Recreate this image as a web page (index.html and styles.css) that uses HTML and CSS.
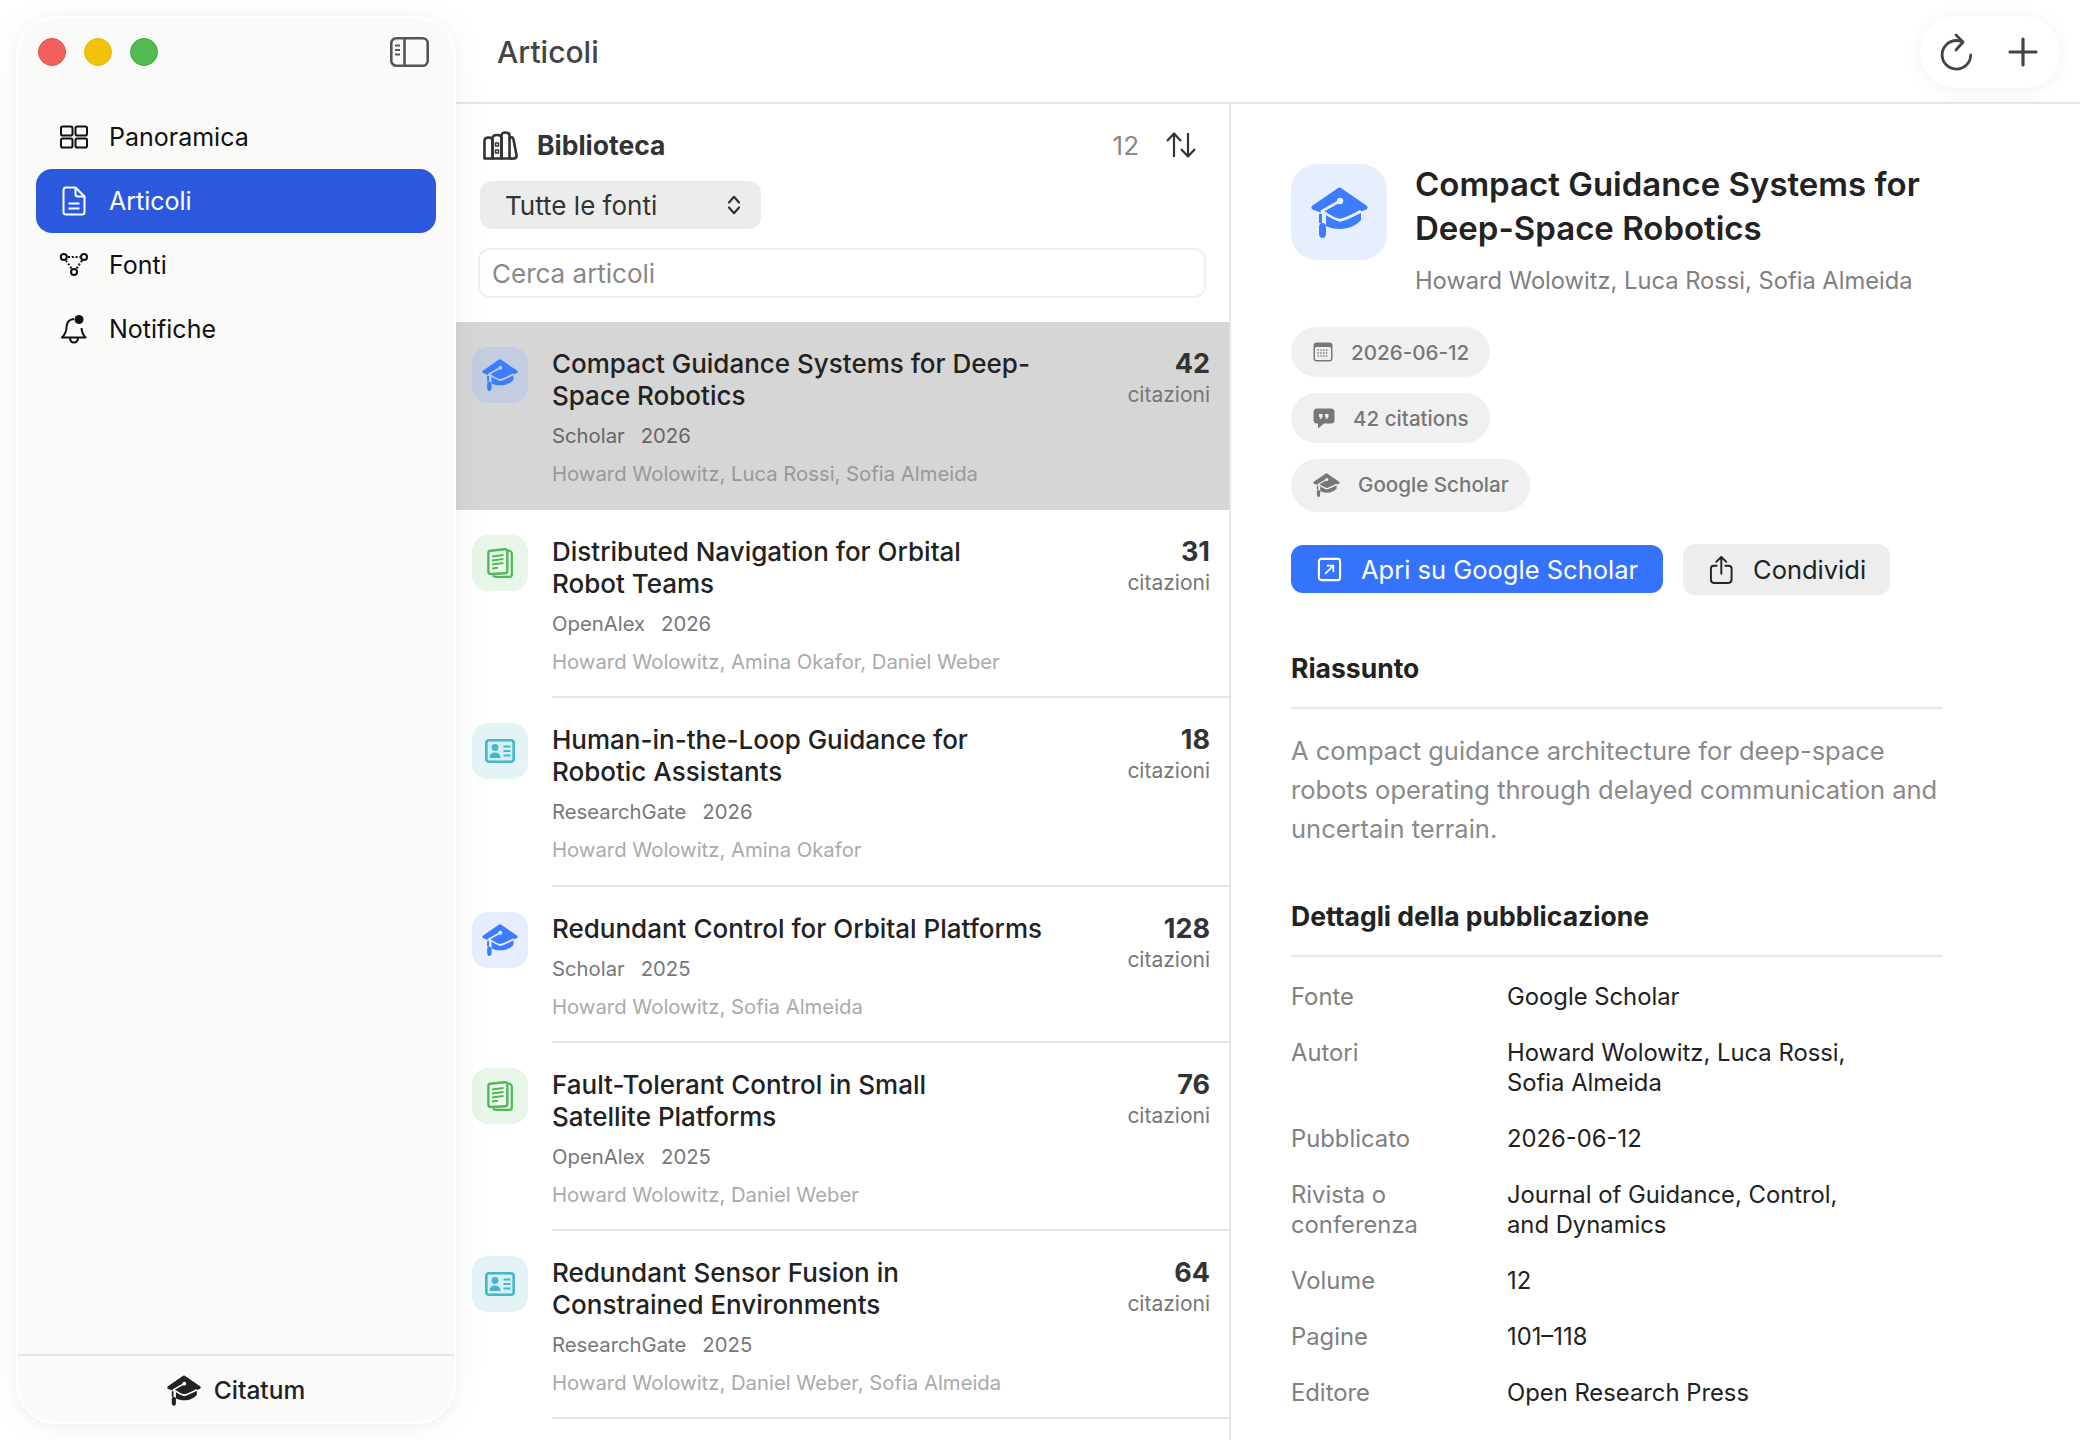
FILE: index.html
```html
<!DOCTYPE html>
<html lang="it">
    <head>
        <meta charset="UTF-8">
        <meta name="viewport" content="width=device-width, initial-scale=1.0">
        <title>Citatum</title>
        <link rel="stylesheet" href="styles.css">
    </head>

    <body>

        <!-- Icone condivise -->

        <svg class="defs" aria-hidden="true">
            <symbol id="cap" viewBox="0 0 57 51">
                <path d="M15 27 L29 35 L50 26 V33 C46 38 38 42 29 42 C24 42 19 41 15 39Z" fill="currentColor"/>
                <path d="M28.5 3 L54 20.5 L28.5 30 L3 20.5Z" fill="currentColor" stroke="currentColor" stroke-width="5" stroke-linejoin="round"/>
                <path d="M11 24 Q24 33 29 33 Q34 33 50 24" fill="none" stroke="var(--cut, #fff)" stroke-width="2.6"/>
                <path d="M29 14 L11 24 V38" fill="none" stroke="var(--cut, #fff)" stroke-width="2.6"/>
                <circle cx="29" cy="14" r="3.2" fill="var(--cut, #fff)"/>
                <path d="M8 27 V36 H11 V27Z" fill="currentColor"/>
                <path d="M8 40 Q8 36 11.500 36 Q15 36 15 40 V46 Q15 51 11.500 51 Q8 51 8 46Z" fill="currentColor"/>
            </symbol>
            <symbol id="book" viewBox="0 0 26 30">
                <path d="M21 2.500 L23 3 Q24.800 3.500 24.800 5.500 V26.500 Q24.800 28.800 22.500 28.800 H9 Q7 28.800 6 27.500" fill="none" stroke="currentColor" stroke-width="2.200"/>
                <path d="M3.500 2.800 L17.500 1.200 Q20.300 1 20.300 3.500 V23 Q20.300 25.200 18 25.300 L4 26 Q1.400 26 1.400 23.500 V5 Q1.400 3 3.500 2.800Z" fill="#eff9ef" stroke="currentColor" stroke-width="2.400"/>
                <path d="M5 8.500 L16.500 7 M5 12.500 L16.500 11 M5 16.500 L16.500 15 M5 20.500 L11 19.700" stroke="currentColor" stroke-width="2"/>
            </symbol>
            <symbol id="card" viewBox="0 0 30 24">
                <rect x="1.300" y="1.300" width="27.400" height="21.400" rx="2.800" fill="#d6eff3" stroke="currentColor" stroke-width="2.600"/>
                <circle cx="10" cy="8.500" r="3.400" fill="currentColor"/>
                <path d="M4.500 19 Q4.500 13.500 10 13.500 Q15.500 13.500 15.500 19Z" fill="currentColor"/>
                <path d="M18.500 7.500 H25.500 M18.500 12 H25.500 M18.500 16.500 H25.500" stroke="currentColor" stroke-width="2"/>
            </symbol>
        </svg>

        <div class="app">

            <!-- Barra laterale -->

            <aside class="sidebar">
                <div class="window-bar">
                    <div class="lights">
                        <span class="light red"></span>
                        <span class="light yellow"></span>
                        <span class="light green"></span>
                    </div>
                    <svg class="toggle" viewBox="0 0 39 30" fill="none" stroke="#555">
                        <rect x="1.300" y="1.300" width="36.400" height="27.400" rx="5" stroke-width="2.600"/>
                        <path d="M14.500 1.500 V28.500" stroke-width="2.600"/>
                        <path d="M5 8.500 H10 M5 13 H10 M5 17.500 H10" stroke-width="1.800"/>
                    </svg>
                </div>

                <nav class="nav">
                    <a class="nav-item">
                        <svg class="nav-icon" viewBox="0 0 30 30" fill="none" stroke="currentColor" stroke-width="2">
                            <rect x="2" y="4.500" width="11.500" height="9" rx="1.800"/>
                            <rect x="16.500" y="4.500" width="11.500" height="9" rx="1.800"/>
                            <rect x="2" y="16.500" width="11.500" height="9" rx="1.800"/>
                            <rect x="16.500" y="16.500" width="11.500" height="9" rx="1.800"/>
                        </svg>
                        <span>Panoramica</span>
                    </a>
                    <a class="nav-item active">
                        <svg class="nav-icon" viewBox="0 0 30 30" fill="none" stroke="currentColor" stroke-width="2" stroke-linejoin="round">
                            <path d="M7 1.500 H16.500 L25.500 10.500 V26 Q25.500 28.500 23 28.500 H7 Q4.500 28.500 4.500 26 V4 Q4.500 1.500 7 1.500Z"/>
                            <path d="M16.500 1.500 V8 Q16.500 10.500 19 10.500 H25.500"/>
                            <path d="M9.500 17.500 H20.500 M9.500 22.500 H20.500"/>
                        </svg>
                        <span>Articoli</span>
                    </a>
                    <a class="nav-item">
                        <svg class="nav-icon" viewBox="0 0 30 30" fill="none" stroke="currentColor" stroke-width="2">
                            <circle cx="4.800" cy="7" r="3"/>
                            <circle cx="25" cy="7" r="3"/>
                            <circle cx="15" cy="22" r="3"/>
                            <path d="M9 7 H21 M7 10.500 L12.500 18.500 M23 10.500 L17.500 18.500" stroke-dasharray="2 1.800"/>
                        </svg>
                        <span>Fonti</span>
                    </a>
                    <a class="nav-item">
                        <svg class="nav-icon" viewBox="0 0 30 30" fill="none" stroke="currentColor" stroke-width="2" stroke-linejoin="round">
                            <path d="M15 5 Q8 5.500 7.500 13 Q7.500 19 3 23.500 H26.500 Q23 20 22.500 14"/>
                            <path d="M11 23.500 Q11 28.500 15 28.500 Q19 28.500 19 23.500"/>
                            <circle cx="20" cy="5.500" r="4.500" fill="currentColor" stroke="none"/>
                        </svg>
                        <span>Notifiche</span>
                    </a>
                </nav>

                <div class="brand">
                    <svg class="brand-icon" style="--cut: #fafaf9"><use href="#cap"/></svg>
                    <span>Citatum</span>
                </div>
            </aside>

            <main class="main">

                <!-- Barra superiore -->

                <header class="topbar">
                    <h1 class="page-title">Articoli</h1>
                    <div class="top-actions">
                        <svg class="top-icon" viewBox="0 0 36 38" fill="none" stroke="#444" stroke-width="2.800" stroke-linecap="round" stroke-linejoin="round">
                            <path d="M32.700 22 A14.300 14.300 0 1 1 18.400 7.500 Q22 7.500 24.500 9"/>
                            <path d="M18 2 L25 9 L18 17"/>
                        </svg>
                        <svg class="top-icon" viewBox="0 0 36 38" fill="none" stroke="#444" stroke-width="3.200" stroke-linecap="round">
                            <path d="M18 6 V32 M5 19 H31"/>
                        </svg>
                    </div>
                </header>

                <div class="content">

                    <!-- Biblioteca -->

                    <section class="library">
                        <div class="library-head">
                            <div class="library-title">
                                <svg class="library-icon" viewBox="0 0 35 29" fill="none" stroke="#333" stroke-width="2.600" stroke-linejoin="round">
                                    <path d="M1.500 27.500 V9.500 Q1.500 6.500 5.500 6.500 Q9.500 6.500 9.500 9.500 V27.500Z"/>
                                    <path d="M9.500 27.500 V7 Q9.500 4 14 4 Q18.500 4 18.500 7 V27.500Z"/>
                                    <path d="M18.500 27.500 V4.500 Q18.500 1.500 22.500 1.500 Q26.500 1.500 26.500 4.500 V27.500Z"/>
                                    <path d="M26.500 7.500 Q29.500 4.500 30.500 8.500 L33.500 24 Q34 27 31 27.500 Q28.500 27.800 26.500 27.500"/>
                                    <path d="M12.500 12 H15.500 V15 H12.500Z M12.500 19 H15.500 V22 H12.500Z" stroke-width="1.500"/>
                                </svg>
                                <span>Biblioteca</span>
                            </div>
                            <div class="library-tools">
                                <span class="library-count">12</span>
                                <svg class="sort-icon" viewBox="0 0 32 26" fill="none" stroke="#333" stroke-width="2.200" stroke-linejoin="round">
                                    <path d="M9 25 V2 M2 9 L9 1.500 L16 9"/>
                                    <path d="M23 1 V24 M16 17 L23 24.500 L30 17"/>
                                </svg>
                            </div>
                        </div>
                        <div class="source-select">
                            <span>Tutte le fonti</span>
                            <svg class="chevrons" viewBox="0 0 14 20" fill="none" stroke="#333" stroke-width="2.200" stroke-linecap="round" stroke-linejoin="round">
                                <path d="M2 7.500 L7 1.800 L12 7.500 M2 12.500 L7 18.200 L12 12.500"/>
                            </svg>
                        </div>
                        <div class="search">Cerca articoli</div>

                        <ul class="articles">
                            <li class="article selected">
                                <div class="source-icon scholar"><svg class="icon-cap"><use href="#cap"/></svg></div>
                                <div class="article-body">
                                    <div class="article-title">Compact Guidance Systems for Deep-<br>Space Robotics</div>
                                    <div class="article-meta"><span>Scholar</span><span>2026</span></div>
                                    <div class="article-authors">Howard Wolowitz, Luca Rossi, Sofia Almeida</div>
                                </div>
                                <div class="article-count"><b>42</b><span>citazioni</span></div>
                            </li>
                            <li class="article">
                                <div class="source-icon openalex"><svg class="icon-book"><use href="#book"/></svg></div>
                                <div class="article-body">
                                    <div class="article-title">Distributed Navigation for Orbital<br>Robot Teams</div>
                                    <div class="article-meta"><span>OpenAlex</span><span>2026</span></div>
                                    <div class="article-authors">Howard Wolowitz, Amina Okafor, Daniel Weber</div>
                                </div>
                                <div class="article-count"><b>31</b><span>citazioni</span></div>
                            </li>
                            <li class="article">
                                <div class="source-icon gate"><svg class="icon-card"><use href="#card"/></svg></div>
                                <div class="article-body">
                                    <div class="article-title">Human-in-the-Loop Guidance for<br>Robotic Assistants</div>
                                    <div class="article-meta"><span>ResearchGate</span><span>2026</span></div>
                                    <div class="article-authors">Howard Wolowitz, Amina Okafor</div>
                                </div>
                                <div class="article-count"><b>18</b><span>citazioni</span></div>
                            </li>
                            <li class="article">
                                <div class="source-icon scholar"><svg class="icon-cap"><use href="#cap"/></svg></div>
                                <div class="article-body">
                                    <div class="article-title">Redundant Control for Orbital Platforms</div>
                                    <div class="article-meta"><span>Scholar</span><span>2025</span></div>
                                    <div class="article-authors">Howard Wolowitz, Sofia Almeida</div>
                                </div>
                                <div class="article-count"><b>128</b><span>citazioni</span></div>
                            </li>
                            <li class="article">
                                <div class="source-icon openalex"><svg class="icon-book"><use href="#book"/></svg></div>
                                <div class="article-body">
                                    <div class="article-title">Fault-Tolerant Control in Small<br>Satellite Platforms</div>
                                    <div class="article-meta"><span>OpenAlex</span><span>2025</span></div>
                                    <div class="article-authors">Howard Wolowitz, Daniel Weber</div>
                                </div>
                                <div class="article-count"><b>76</b><span>citazioni</span></div>
                            </li>
                            <li class="article">
                                <div class="source-icon gate"><svg class="icon-card"><use href="#card"/></svg></div>
                                <div class="article-body">
                                    <div class="article-title">Redundant Sensor Fusion in<br>Constrained Environments</div>
                                    <div class="article-meta"><span>ResearchGate</span><span>2025</span></div>
                                    <div class="article-authors">Howard Wolowitz, Daniel Weber, Sofia Almeida</div>
                                </div>
                                <div class="article-count"><b>64</b><span>citazioni</span></div>
                            </li>
                        </ul>
                    </section>

                    <!-- Dettaglio -->

                    <section class="detail">
                        <div class="detail-head">
                            <div class="detail-icon"><svg class="detail-cap"><use href="#cap"/></svg></div>
                            <div>
                                <h2 class="detail-title">Compact Guidance Systems for Deep-Space Robotics</h2>
                                <div class="detail-authors">Howard Wolowitz, Luca Rossi, Sofia Almeida</div>
                            </div>
                        </div>

                        <div class="chips">
                            <div class="chip">
                                <svg class="chip-date" viewBox="0 0 20 20">
                                    <rect x="0.500" y="0.500" width="19" height="19" rx="3" fill="#777"/>
                                    <rect x="2" y="5" width="16" height="13" rx="1.500" fill="#f0f0f0"/>
                                    <path d="M4.500 8 H15.500 M4.500 11 H15.500 M4.500 14 H15.500" stroke="#777" stroke-width="1.400" stroke-dasharray="1.400 1.400"/>
                                </svg>
                                <span>2026-06-12</span>
                            </div>
                            <div class="chip">
                                <svg class="chip-quote" viewBox="0 0 22 21">
                                    <path d="M4 0.500 H18 Q21.500 0.500 21.500 4 V12 Q21.500 15.500 18 15.500 H11 L5 20.500 V15.500 H4 Q0.500 15.500 0.500 12 V4 Q0.500 0.500 4 0.500Z" fill="#777"/>
                                    <path d="M6 6 H9.500 V9 L8 11 H6.500 L7.500 9 H6Z M12 6 H15.500 V9 L14 11 H12.500 L13.500 9 H12Z" fill="#f0f0f0"/>
                                </svg>
                                <span>42 citations</span>
                            </div>
                            <div class="chip chip-tall">
                                <svg class="chip-cap" style="--cut: #f0f0f0"><use href="#cap"/></svg>
                                <span>Google Scholar</span>
                            </div>
                        </div>

                        <div class="actions">
                            <a class="btn btn-primary">
                                <svg class="btn-icon" viewBox="0 0 26 26" fill="none" stroke="#fff" stroke-width="2.200" stroke-linecap="round" stroke-linejoin="round">
                                    <rect x="2" y="2" width="22" height="22" rx="2.500"/>
                                    <path d="M9 17 L17 9 M11 9 H17 V15" stroke-width="1.800"/>
                                </svg>
                                <span>Apri su Google Scholar</span>
                            </a>
                            <a class="btn btn-secondary">
                                <svg class="btn-icon share" viewBox="0 0 26 30" fill="none" stroke="#222" stroke-width="2" stroke-linecap="round" stroke-linejoin="round">
                                    <path d="M8 10.500 H5 Q2 10.500 2 13.500 V25 Q2 28.500 5 28.500 H20 Q23.500 28.500 23.500 25 V13.500 Q23.500 10.500 20 10.500 H17"/>
                                    <path d="M12.800 19 V1.500 M7.500 6.500 L12.800 1.500 L18 6.500"/>
                                </svg>
                                <span>Condividi</span>
                            </a>
                        </div>

                        <h3 class="section-title">Riassunto</h3>
                        <p class="summary">A compact guidance architecture for deep-space robots operating through delayed communication and uncertain terrain.</p>

                        <h3 class="section-title details-title">Dettagli della pubblicazione</h3>
                        <dl class="facts">
                            <dt>Fonte</dt><dd>Google Scholar</dd>
                            <dt>Autori</dt><dd>Howard Wolowitz, Luca Rossi, Sofia Almeida</dd>
                            <dt>Pubblicato</dt><dd>2026-06-12</dd>
                            <dt>Rivista o conferenza</dt><dd>Journal of Guidance, Control, and Dynamics</dd>
                            <dt>Volume</dt><dd>12</dd>
                            <dt>Pagine</dt><dd>101–118</dd>
                            <dt>Editore</dt><dd>Open Research Press</dd>
                        </dl>
                    </section>
                </div>
            </main>
        </div>

    </body>
</html>
```

FILE: styles.css
```css
* {
    box-sizing: border-box;
}

html,
body {
    margin: 0;
    height: 100%;
    overflow: hidden;
    background: #fff;
}

body {
    font-family: "Inter", "Liberation Sans", sans-serif;
    color: #222;
}

.defs {
    position: absolute;
    width: 0;
    height: 0;
}

.app {
    display: flex;
    height: 1440px;
}

/* Barra laterale */

.sidebar {
    position: relative;
    z-index: 2;
    display: flex;
    flex-direction: column;
    flex: none;
    width: 440px;
    height: 1408px;
    margin: 16px 0 16px 16px;
    background: #fafaf9;
    border: 2px solid #fff;
    border-radius: 40px;
    box-shadow: 0 2px 14px rgba(0, 0, 0, 0.04), 0 2px 40px rgba(0, 0, 0, 0.04);
}

.window-bar {
    display: flex;
    align-items: center;
    justify-content: space-between;
    height: 87px;
    padding: 0 25px 20px 20px;
    flex: none;
}

.lights {
    display: flex;
    gap: 18px;
}

.light {
    width: 28px;
    height: 28px;
    border-radius: 50%;
}

.red {
    background: #f1605a;
    border: 1px solid #e5484a;
}

.yellow {
    background: #f2c20a;
    border: 1px solid #e8b908;
}

.green {
    background: #50bb4e;
    border: 1px solid #3fae3f;
}

.toggle {
    width: 39px;
    height: 30px;
}

.nav {
    display: flex;
    flex-direction: column;
    flex: 1;
    padding: 0 18px;
}

.nav-item {
    display: flex;
    align-items: center;
    gap: 20px;
    height: 64.5px;
    padding-left: 23px;
    border-radius: 16px;
    font-size: 25px;
    color: #111;
}

.nav-item.active {
    height: 64px;
    margin-top: -1px;
    background: #2c58de;
    color: #fff;
}

.nav-icon {
    flex: none;
    width: 30px;
    height: 30px;
}

.brand {
    display: flex;
    align-items: center;
    justify-content: center;
    gap: 13px;
    height: 68px;
    flex: none;
    border-top: 2px solid #e6e6e4;
    padding-top: 2px;
    font-size: 24.5px;
    font-weight: 500;
}

.brand-icon {
    width: 34px;
    height: 31px;
    color: #222;
}

/* Barra superiore */

.main {
    display: flex;
    flex-direction: column;
    flex: 1;
    min-width: 0;
}

.topbar {
    display: flex;
    align-items: center;
    justify-content: space-between;
    flex: none;
    height: 104px;
    padding: 2px 20px 0 41px;
    border-bottom: 2px solid #e6e6e6;
}

.page-title {
    margin: 0;
    font-size: 30px;
    font-weight: 500;
    color: #444;
}

.top-actions {
    display: flex;
    align-items: center;
    gap: 31px;
    height: 72px;
    padding: 0 19px 0 18px;
    background: #fff;
    border-radius: 36px;
    box-shadow: 0 2px 18px rgba(0, 0, 0, 0.06);
}

.top-icon {
    width: 36px;
    height: 38px;
}

.content {
    display: flex;
    flex: 1;
    min-height: 0;
}

/* Biblioteca */

.library {
    flex: none;
    width: 775px;
    border-right: 2px solid #e6e6e6;
}

.library-head {
    display: flex;
    align-items: center;
    justify-content: space-between;
    height: 40px;
    margin: 21px 32px 16px 27px;
}

.library-title {
    display: flex;
    align-items: center;
    gap: 19px;
    font-size: 26.5px;
    font-weight: 700;
    color: #333;
}

.library-icon {
    width: 35px;
    height: 29px;
}

.library-tools {
    display: flex;
    align-items: center;
    gap: 26px;
}

.library-count {
    font-size: 26px;
    color: #888;
}

.sort-icon {
    width: 32px;
    height: 26px;
}

.source-select {
    display: flex;
    align-items: center;
    justify-content: space-between;
    width: 281px;
    height: 48px;
    margin-left: 24px;
    padding: 0 20px 0 25px;
    background: #ececec;
    border-radius: 12px;
    font-size: 26px;
    color: #333;
}

.chevrons {
    width: 14px;
    height: 20px;
}

.search {
    display: flex;
    align-items: center;
    width: 728px;
    height: 50px;
    margin: 19px 0 24px 22px;
    padding-left: 12px;
    border: 2px solid #f0f0f0;
    border-radius: 12px;
    font-size: 26px;
    color: #888;
}

.articles {
    margin: 0;
    padding: 0;
    list-style: none;
}

.article {
    position: relative;
    display: flex;
    padding: 26px 19px 22.2px 16px;
}

.article::after {
    content: "";
    position: absolute;
    left: 96px;
    right: 0;
    bottom: 0;
    height: 2px;
    background: #e6e6e6;
}

.article.selected {
    background: #d6d6d6;
}

.article.selected::after {
    display: none;
}

.source-icon {
    display: flex;
    align-items: center;
    justify-content: center;
    flex: none;
    width: 56px;
    height: 56px;
    margin-top: -1px;
    border-radius: 16px;
}

.scholar {
    --cut: #e6edfe;
    background: #e6edfe;
    color: #3d7cff;
}

.selected .scholar {
    --cut: #c3cde2;
    background: #c3cde2;
}

.openalex {
    background: #e8f5e9;
    color: #4dbb55;
}

.gate {
    background: #e4f3f5;
    color: #45b6cc;
}

.icon-cap {
    width: 36px;
    height: 32px;
}

.icon-book {
    width: 26px;
    height: 30px;
}

.icon-card {
    width: 30px;
    height: 24px;
}

.article-body {
    flex: 1;
    min-width: 0;
    margin-left: 24px;
}

.article-title {
    font-size: 26px;
    font-weight: 500;
    line-height: 32px;
    color: #222;
}

.article-meta {
    display: flex;
    gap: 16px;
    margin-top: 10px;
    font-size: 20.3px;
    line-height: 28px;
    color: #777;
}

.article-authors {
    margin-top: 10px;
    font-size: 20.3px;
    line-height: 28px;
    color: #aaa;
}

.selected .article-meta {
    color: #666;
}

.selected .article-authors {
    color: #999;
}

.article-count {
    display: flex;
    flex-direction: column;
    align-items: flex-end;
    flex: none;
}

.article-count b {
    font-size: 27px;
    line-height: 32px;
    color: #333;
}

.article-count span {
    font-size: 21px;
    line-height: 30px;
    color: #777;
}

/* Dettaglio */

.detail {
    flex: 1;
    min-width: 0;
    padding: 58px 0 0 60px;
}

.detail-head {
    display: flex;
    gap: 28px;
}

.detail-icon {
    display: flex;
    align-items: center;
    justify-content: center;
    flex: none;
    width: 96px;
    height: 96px;
    margin-top: 2px;
    background: #e7eefe;
    border-radius: 26px;
}

.detail-cap {
    --cut: #e7eefe;
    width: 57px;
    height: 51px;
    color: #3d7cff;
}

.detail-title {
    width: 540px;
    margin: 0;
    font-size: 33px;
    font-weight: 600;
    line-height: 44px;
    color: #222;
}

.detail-authors {
    margin-top: 15px;
    font-size: 23.7px;
    line-height: 32px;
    color: #808080;
}

.chips {
    display: flex;
    flex-direction: column;
    align-items: flex-start;
    gap: 16px;
    margin-top: 30px;
}

.chip {
    display: flex;
    align-items: center;
    gap: 18px;
    height: 50px;
    padding: 0 21px 0 22px;
    background: #f0f0f0;
    border-radius: 25px;
    font-size: 20.6px;
    font-weight: 500;
    color: #777;
}

.chip-tall {
    height: 53px;
    padding-bottom: 2px;
    border-radius: 27px;
}

.chip-date {
    width: 20px;
    height: 20px;
}

.chip-quote {
    width: 22px;
    height: 21px;
}

.chip-cap {
    width: 27px;
    height: 24px;
}

.actions {
    display: flex;
    align-items: flex-start;
    gap: 20px;
    margin-top: 32px;
}

.btn {
    display: flex;
    align-items: center;
    font-size: 25.5px;
    border-radius: 12px;
}

.btn-primary {
    gap: 19px;
    width: 372px;
    height: 48px;
    margin-top: 1px;
    padding-left: 26px;
    background: #3673fd;
    color: #fff;
}

.btn-secondary {
    gap: 19px;
    width: 207px;
    height: 51px;
    padding-left: 26px;
    background: #ededed;
    color: #222;
}

.btn-icon {
    width: 25px;
    height: 25px;
}

.btn-icon.share {
    height: 30px;
}

.section-title {
    width: 652px;
    margin: 57px 0 0;
    padding-bottom: 23px;
    border-bottom: 2px solid #e8e8e8;
    font-size: 26.5px;
    font-weight: 700;
    line-height: 32px;
    color: #222;
}

.summary {
    width: 652px;
    margin: 22px 0 0;
    font-size: 25.5px;
    line-height: 39px;
    color: #8a8a8a;
}

.details-title {
    margin-top: 52px;
}

.facts {
    display: grid;
    grid-template-columns: 216px 345px;
    row-gap: 26px;
    margin: 25px 0 0;
    font-size: 23.8px;
    line-height: 30px;
}

.facts dt {
    color: #808080;
}

.facts dd {
    margin: 0;
    color: #222;
}
```
